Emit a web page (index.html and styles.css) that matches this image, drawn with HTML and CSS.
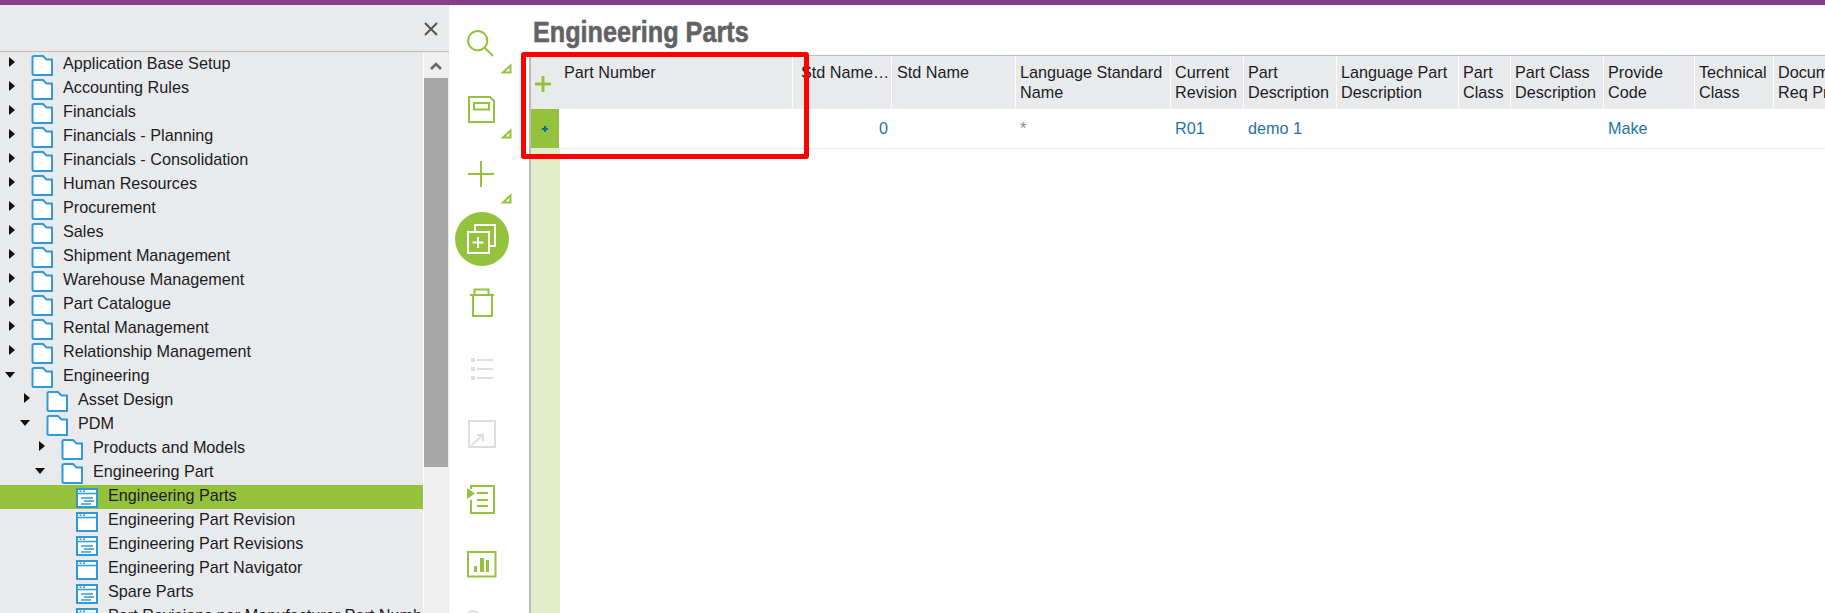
FILE: index.html
```html
<!DOCTYPE html>
<html lang="en">
<head>
<meta charset="utf-8">
<title>Engineering Parts</title>
<link rel="stylesheet" href="styles.css">
</head>
<body>
<div class="topbar"></div>
<div class="app">
  <aside class="nav">
    <div class="nav-head">
      <svg class="close" width="14" height="14" viewBox="0 0 14 14"><path d="M1 1L13 13M13 1L1 13"/></svg>
    </div>
    <div class="nav-body">
      <ul class="tree">
        <li class="row d0"><i class="arrow right"></i><svg class="ic"><use href="#folder"/></svg><span>Application Base Setup</span></li>
        <li class="row d0"><i class="arrow right"></i><svg class="ic"><use href="#folder"/></svg><span>Accounting Rules</span></li>
        <li class="row d0"><i class="arrow right"></i><svg class="ic"><use href="#folder"/></svg><span>Financials</span></li>
        <li class="row d0"><i class="arrow right"></i><svg class="ic"><use href="#folder"/></svg><span>Financials - Planning</span></li>
        <li class="row d0"><i class="arrow right"></i><svg class="ic"><use href="#folder"/></svg><span>Financials - Consolidation</span></li>
        <li class="row d0"><i class="arrow right"></i><svg class="ic"><use href="#folder"/></svg><span>Human Resources</span></li>
        <li class="row d0"><i class="arrow right"></i><svg class="ic"><use href="#folder"/></svg><span>Procurement</span></li>
        <li class="row d0"><i class="arrow right"></i><svg class="ic"><use href="#folder"/></svg><span>Sales</span></li>
        <li class="row d0"><i class="arrow right"></i><svg class="ic"><use href="#folder"/></svg><span>Shipment Management</span></li>
        <li class="row d0"><i class="arrow right"></i><svg class="ic"><use href="#folder"/></svg><span>Warehouse Management</span></li>
        <li class="row d0"><i class="arrow right"></i><svg class="ic"><use href="#folder"/></svg><span>Part Catalogue</span></li>
        <li class="row d0"><i class="arrow right"></i><svg class="ic"><use href="#folder"/></svg><span>Rental Management</span></li>
        <li class="row d0"><i class="arrow right"></i><svg class="ic"><use href="#folder"/></svg><span>Relationship Management</span></li>
        <li class="row d0"><i class="arrow down"></i><svg class="ic"><use href="#folder"/></svg><span>Engineering</span></li>
        <li class="row d1"><i class="arrow right"></i><svg class="ic"><use href="#folder"/></svg><span>Asset Design</span></li>
        <li class="row d1"><i class="arrow down"></i><svg class="ic"><use href="#folder"/></svg><span>PDM</span></li>
        <li class="row d2"><i class="arrow right"></i><svg class="ic"><use href="#folder"/></svg><span>Products and Models</span></li>
        <li class="row d2"><i class="arrow down"></i><svg class="ic"><use href="#folder"/></svg><span>Engineering Part</span></li>
        <li class="row d3 selected"><i class="arrow"></i><svg class="ic"><use href="#page-lines"/></svg><span>Engineering Parts</span></li>
        <li class="row d3"><i class="arrow"></i><svg class="ic"><use href="#page"/></svg><span>Engineering Part Revision</span></li>
        <li class="row d3"><i class="arrow"></i><svg class="ic"><use href="#page-lines"/></svg><span>Engineering Part Revisions</span></li>
        <li class="row d3"><i class="arrow"></i><svg class="ic"><use href="#page"/></svg><span>Engineering Part Navigator</span></li>
        <li class="row d3"><i class="arrow"></i><svg class="ic"><use href="#page-lines"/></svg><span>Spare Parts</span></li>
        <li class="row d3"><i class="arrow"></i><svg class="ic"><use href="#page-lines"/></svg><span>Part Revisions per Manufacturer Part Number</span></li>
      </ul>
      <div class="scrollbar">
        <div class="scroll-up"><svg width="12" height="8" viewBox="0 0 12 8"><path d="M1 7L6 2L11 7"/></svg></div>
        <div class="scroll-thumb"></div>
      </div>
    </div>
  </aside>

  <nav class="tools">
    <svg class="tool" viewBox="0 0 80 65"><circle cx="28.7" cy="28.7" r="9.6"/><path d="M35.5 35.5L44 44"/><path class="tri" d="M61.5 53.5V60.5H54Z"/></svg>
    <svg class="tool" viewBox="0 0 80 65"><path d="M20 20H41L45 24V45H20Z"/><rect x="25" y="26" width="15" height="6.5"/><path class="tri" d="M61.5 53.5V60.5H54Z"/></svg>
    <svg class="tool" viewBox="0 0 80 65"><path d="M19 32H45M32 19V45"/><path class="tri" d="M61.5 53.5V60.5H54Z"/></svg>
    <svg class="tool active" viewBox="0 0 80 65"><circle class="disc" cx="33" cy="32" r="27"/><path d="M26 25V18H46V39H40"/><rect x="19" y="25" width="21" height="21"/><path d="M23.5 35.500H34.500M29 30V41"/></svg>
    <svg class="tool" viewBox="0 0 80 65"><path d="M21 23H45M25.500 23V17.500H39.500V23M24 23V44H43V23"/></svg>
    <svg class="tool off" viewBox="0 0 80 65"><rect class="solid" x="22" y="21" width="4" height="4"/><rect class="solid" x="22" y="30" width="4" height="4"/><rect class="solid" x="22" y="39" width="4" height="4"/><path d="M28 23H44M28 32H44M28 41H44"/></svg>
    <svg class="tool off" viewBox="0 0 80 65"><rect x="20" y="19" width="26" height="26"/><path d="M22 44L33.500 33M28 33H34V39"/></svg>
    <svg class="tool" viewBox="0 0 80 65"><path d="M22 22V19H45V46H22V33"/><path class="solid" d="M18 21L26 26.500L18 32Z"/><path d="M28 26H39M28 33H39M28 39H39"/></svg>
    <svg class="tool" viewBox="0 0 80 65"><rect x="19" y="20" width="27.500" height="24.500"/><rect class="solid" x="25" y="34" width="3" height="6"/><rect class="solid" x="31" y="26" width="4" height="14"/><rect class="solid" x="37" y="28" width="3" height="12"/></svg>
    <svg class="tool off" viewBox="0 0 80 65"><circle cx="24" cy="20" r="6"/></svg>
  </nav>

  <main class="main">
    <h1 class="title">Engineering Parts</h1>
    <div class="grid">
      <div class="cols head">
        <div class="sel"><svg width="16" height="16" viewBox="0 0 16 16"><path d="M0 8H16M8 0V16"/></svg></div>
        <div class="th">Part Number</div>
        <div class="th wide">Std Name…</div>
        <div class="th pad7">Std Name</div>
        <div class="th">Language Standard Name</div>
        <div class="th">Current Revision</div>
        <div class="th">Part Description</div>
        <div class="th">Language Part Description</div>
        <div class="th">Part Class</div>
        <div class="th">Part Class Description</div>
        <div class="th">Provide Code</div>
        <div class="th">Technical Class</div>
        <div class="th">Document Req Print</div>
      </div>
      <div class="cols body">
        <div class="sel"><svg width="6" height="6" viewBox="0 0 6 6"><path d="M0 3H6M3 0V6"/></svg></div>
        <div class="td"></div>
        <div class="td num">0</div>
        <div class="td"></div>
        <div class="td star">*</div>
        <div class="td">R01</div>
        <div class="td">demo 1</div>
        <div class="td"></div>
        <div class="td"></div>
        <div class="td"></div>
        <div class="td">Make</div>
        <div class="td"></div>
        <div class="td"></div>
      </div>
      <div class="gutter"></div>
    </div>
  </main>
  <div class="callout"></div>
</div>

<svg class="defs" width="0" height="0">
  <defs>
    <symbol id="folder" viewBox="0 0 22 21"><path d="M1.500 2.500Q1.500 1 3 1H12L15.500 4.500H21V20H3Q1.500 20 1.500 18.500Z"/></symbol>
    <symbol id="page" viewBox="0 0 22 21"><path d="M1 2H21V20H1Z"/><path class="bar" d="M1 6.500H21"/><path class="dots" d="M3.500 4.300H5.500M7 4.300H9"/></symbol>
    <symbol id="page-lines" viewBox="0 0 22 21"><path d="M1 2H21V20H1Z"/><path class="bar" d="M1 6.500H21"/><path class="dots" d="M3.500 4.300H5.500M7 4.300H9"/><path class="thin" d="M5 11H17M8 14H18M5 17H15"/></symbol>
  </defs>
</svg>
</body>
</html>
```

FILE: styles.css
```css
* { box-sizing: border-box; }
html, body { margin: 0; height: 613px; overflow: hidden; background: #fff; }
body { font-family: "Liberation Sans", Arial, sans-serif; font-size: 16.2px; color: #1c1c24; }
.defs { position: absolute; }

.topbar { height: 5px; background: #873d8a; }
.app { position: relative; display: flex; height: 608px; overflow: hidden; }

/* navigator */
.nav { width: 449px; flex: none; display: flex; flex-direction: column; background: #e9eaec; }
.nav-head { height: 47px; flex: none; display: flex; justify-content: flex-end; align-items: flex-start; padding: 17px 11px 0 0; border-bottom: 1px solid #bdbdbd; }
.close path { fill: none; stroke: #555; stroke-width: 2; }
.nav-body { flex: 1; display: flex; min-height: 0; padding-top: 1px; }
.tree { list-style: none; margin: 0; padding: 0; width: 423px; flex: none; overflow: hidden; }
.row { display: flex; height: 24px; white-space: nowrap; }
.row span { line-height: 21px; }
.row.selected { background: #95c23d; }
.d0 { padding-left: 5px; }
.d1 { padding-left: 20px; }
.d2 { padding-left: 35px; }
.d3 { padding-left: 50px; }

.arrow { width: 26px; height: 20px; flex: none; position: relative; }
.arrow.right::before { content: ""; position: absolute; left: 4px; top: 4px; border-style: solid; border-width: 5.5px 0 5.5px 6px; border-color: transparent transparent transparent #111; }
.arrow.down::before { content: ""; position: absolute; left: 0; top: 7px; border-style: solid; border-width: 6px 5.5px 0; border-color: #111 transparent transparent; }

.ic { width: 22px; height: 21px; flex: none; margin: 2px 10px 0 0; }
#folder path { fill: #fff; stroke: #2f9ad5; stroke-width: 2; }
#page path, #page-lines path { fill: #fff; stroke: #2f9ad5; stroke-width: 2; }
#page .bar, #page-lines .bar { fill: none; stroke-width: 1.500; }
#page .dots, #page-lines .dots { stroke: #2f9ad5; stroke-width: 1.400; }
#page-lines .thin { fill: none; stroke-width: 1.400; }

.scrollbar { width: 25px; flex: none; background: #efefef; border-left: 1px solid #fff; }
.scroll-up { height: 25px; display: flex; justify-content: center; align-items: center; }
.scroll-up path { fill: none; stroke: #666; stroke-width: 2.500; }
.scroll-thumb { height: 389px; background: #a6a6a6; }

/* toolbar */
.tools { width: 80px; flex: none; padding-top: 7px; display: flex; flex-direction: column; overflow: hidden; background: #fff; }
.tool { width: 80px; height: 65px; flex: none; display: block; fill: none; stroke: #95c23d; stroke-width: 2; }
.tool .tri { stroke-width: 2; }
.tool .solid { fill: #95c23d; stroke: none; }
.tool.off { stroke: #dedede; }
.tool.off .solid { fill: #dedede; }
.tool.active { stroke: #fff; }
.tool.active .disc { fill: #95c23d; stroke: none; }

/* main */
.main { flex: 1; min-width: 0; display: flex; flex-direction: column; overflow: hidden; }
.title { margin: 0 0 0 4px; height: 50px; padding-top: 8px; font-size: 30px; line-height: 38px; font-weight: 700; color: #616265; white-space: nowrap; transform: scaleX(0.84); transform-origin: left top; -webkit-text-stroke: 0.6px #616265; }
.grid { flex: 1; display: flex; flex-direction: column; border-left: 2px solid #bbb; border-top: 1px solid #bdbdbd; min-height: 0; }
.cols { display: grid; grid-template-columns: 29px 233px 99px 124px 155px 73px 93px 122px 52px 93px 91px 79px 88px; width: 1331px; }
.head { height: 53px; background: #e9eaec; flex: none; }
.head .sel { padding: 20px 0 0 4px; }
.head .sel path { fill: none; stroke: #95c23d; stroke-width: 3; }
.sel svg { display: block; }
.th { padding: 7px 4px 0; line-height: 19.500px; position: relative; overflow: hidden; }
.th::after { content: ""; position: absolute; right: 0; top: 1px; bottom: 1px; width: 1px; background: #fff; }
.th.wide { padding-left: 8px; white-space: nowrap; }
.th.pad7 { padding-left: 5px; }

.body { height: 40px; border-bottom: 1px solid #e8e8e8; flex: none; color: #1f74a6; }
.body .sel { background: #95c23d; width: 28px; height: 39px; display: flex; align-items: center; justify-content: center; }
.body .sel path { fill: none; stroke: #0f6aa0; stroke-width: 2; }
.td { padding: 0 4px; line-height: 38px; }
.num { text-align: right; }
.star { color: #8a8a8a; }
.gutter { flex: 1; width: 29px; background: #e1ecc8; }

.callout { position: absolute; left: 521px; top: 47px; width: 288px; height: 107px; border: 5px solid #f00; border-radius: 3px; }
```
